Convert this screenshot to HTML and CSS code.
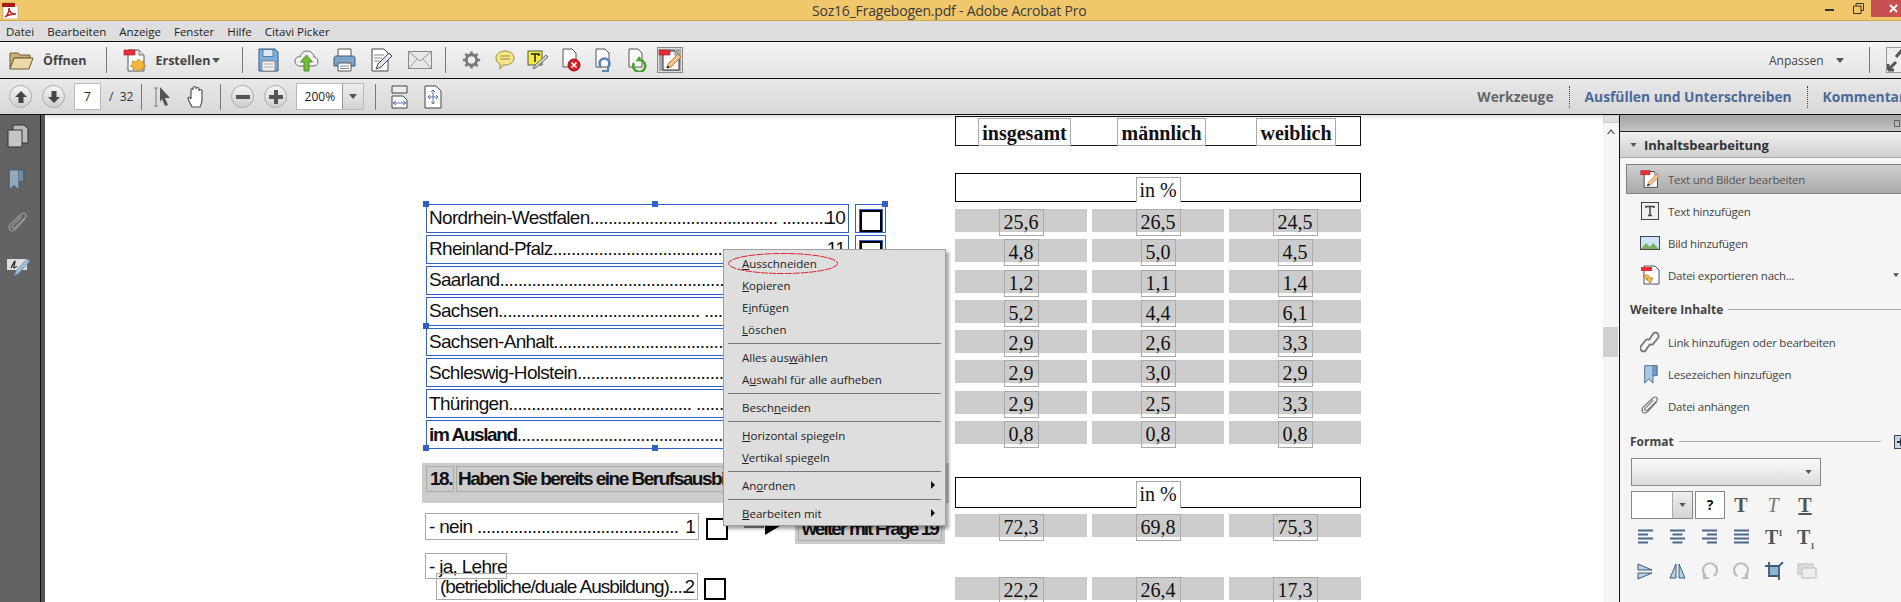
FILE: index.html
```html
<!DOCTYPE html>
<html lang="de">
<head>
  <meta charset="UTF-8" />
  <title>Soz16_Fragebogen.pdf - Adobe Acrobat Pro</title>
  <meta name="viewport" content="width=device-width, initial-scale=1.0" />
  <link rel="stylesheet" href="styles.css">
</head>
<body>
  <svg class="defs" width="0" height="0">
    <symbol id="doc-pencil" viewBox="0 0 24 24">
      <path d="M5 3h12l4 4v15H5z" fill="#fff" stroke="#333"/>
      <path d="M17 3v4h4" fill="#ddd" stroke="#777"/>
      <rect x="1" y="2" width="11" height="5" fill="#e8303a" stroke="#a01a20" stroke-width=".6"/>
      <path d="M9 20l1-4 10-10 3 3-10 10z" fill="#f0c48a" stroke="#a86a3a" stroke-width=".8"/>
      <path d="M9 20l1-2 1 1z" fill="#222" stroke="#222"/>
    </symbol>
    <symbol id="bookmark" viewBox="0 0 18 24">
      <path d="M2 2h10v21l-5-5-5 5z" fill="#a5c8e4" stroke="#3d5a78"/>
      <path d="M12 2h5v12h-5" fill="#6f9cc4" stroke="#3d5a78"/>
    </symbol>
    <symbol id="clip" viewBox="0 0 24 24">
      <path d="M20 7L9 19c-2 2-5 2-6 0s-1-4 1-6L15 3c2-2 4-2 5-1s1 3-1 5L9 17c-1 1-2 1-3 0s0-2 1-3l9-9" fill="none" stroke="currentColor" stroke-width="1.4"/>
    </symbol>
    <symbol id="down-tri" viewBox="0 0 8 5">
      <path d="M0 0h8L4 5z" fill="#555"/>
    </symbol>
  </svg>

  <header class="titlebar">
    <svg class="app-logo" width="18" height="18" viewBox="0 0 18 18">
      <path d="M2 2h11l4 4v12H2z" fill="#fff" stroke="#999" stroke-width=".6"/>
      <rect x="1" y="2" width="13" height="4" fill="#b01818"/>
      <path d="M4 16c3-2 4-6 4-9 0 3 2 6 7 6-4 0-8 1-11 3z" fill="none" stroke="#c02020" stroke-width="1.4"/>
    </svg>
    <span class="title-text">Soz16_Fragebogen.pdf - Adobe Acrobat Pro</span>
    <div class="win-btns">
      <span class="win-min"></span>
      <svg class="win-restore" width="11" height="11" viewBox="0 0 11 11">
        <path d="M3 2.500V.5h7.500v7H8M.5 3h7.500v7.500H.5z" fill="none" stroke="#333"/>
      </svg>
      <div class="win-close">
        <svg width="9" height="9" viewBox="0 0 9 9"><path d="M1 1l7 7M8 1L1 8" stroke="#fff" stroke-width="1.800"/></svg>
      </div>
    </div>
  </header>

  <nav class="menubar">
    <span>Datei</span><span>Bearbeiten</span><span>Anzeige</span><span>Fenster</span><span>Hilfe</span><span>Citavi Picker</span>
  </nav>

  <div class="toolbar toolbar-main">
    <svg class="open-icon" width="25" height="22" viewBox="0 0 25 22">
      <path d="M1 4h8l2 2h10v3H5L1 20z" fill="#c8b078" stroke="#6a5a38"/>
      <path d="M5 9h19l-4 11H1z" fill="#ecd9a8" stroke="#6a5a38"/>
    </svg>
    <span class="tb-label open-label">Öffnen</span>
    <span class="tb-sep sep-a"></span>
    <svg class="create-icon" width="24" height="26" viewBox="0 0 24 26">
      <path d="M5 3h11l5 5v16H5z" fill="#fff" stroke="#555"/>
      <path d="M16 3v5h5" fill="#ddd" stroke="#777"/>
      <rect x="1" y="3" width="11" height="5" fill="#e8303a" stroke="#a01a20" stroke-width=".6"/>
      <path d="M16 12l2 3 3-1-1 3 3 2-3 1 0 3-3-1-2 3-2-3-3 1 0-3-3-1 3-2-1-3 3 1z" fill="#f0b83a" stroke="#b07a18" stroke-width=".6"/>
    </svg>
    <span class="tb-label create-label">Erstellen</span>
    <svg class="create-arrow" width="8" height="5"><use href="#down-tri"/></svg>
    <span class="tb-sep sep-b"></span>

    <div class="tb-cell wide">
      <svg width="21" height="24" viewBox="0 0 21 24">
        <path d="M1 1h16l3 3v19H1z" fill="#7fb0dc" stroke="#2f5a88"/>
        <rect x="5" y="1.500" width="10" height="7" fill="#d8e8f4" stroke="#2f5a88" stroke-width=".7"/>
        <rect x="4" y="13" width="13" height="10" fill="#f0f0f0" stroke="#667" stroke-width=".7"/>
        <path d="M6 16h9M6 19h9" stroke="#aaa"/>
      </svg>
    </div>
    <div class="tb-cell wide">
      <svg width="25" height="23" viewBox="0 0 25 23">
        <path d="M6 17C2 17 1 14 1 12c0-3 3-5 5-4 1-4 4-6 7-6 4 0 7 3 7 6 3 0 4 3 4 5 0 2-2 4-5 4z" fill="#f2f2f2" stroke="#666"/>
        <path d="M12.500 6l6 7h-3.500v9h-5v-9H6.500z" fill="#6fbf3a" stroke="#3d7a1c" stroke-width=".8"/>
      </svg>
    </div>
    <div class="tb-cell wide">
      <svg width="23" height="24" viewBox="0 0 23 24">
        <path d="M5 1h13v8H5z" fill="#fff" stroke="#555"/>
        <path d="M1 10c0-1 1-2 2-2h17c1 0 2 1 2 2v8H1z" fill="#7ea4c8" stroke="#3d5a78"/>
        <path d="M5 15h13v8H5z" fill="#fff" stroke="#555"/>
        <path d="M7 18h9M7 20.500h9" stroke="#888"/>
      </svg>
    </div>
    <div class="tb-cell wide">
      <svg width="22" height="24" viewBox="0 0 22 24">
        <path d="M1 1h12l4 4v18H1z" fill="#fff" stroke="#444"/>
        <path d="M3 7h10M3 10h8M3 13h6" stroke="#888"/>
        <path d="M5 21l2-5 11-11 3 3-11 11z" fill="#dfe6ee" stroke="#445"/>
      </svg>
    </div>
    <div class="tb-cell wide">
      <svg width="24" height="18" viewBox="0 0 24 18">
        <rect x=".5" y=".5" width="23" height="17" fill="#e8e8e8" stroke="#888"/>
        <path d="M1 1l11 9 11-9M1 17l8-9M23 17l-8-9" fill="none" stroke="#999"/>
      </svg>
    </div>
    <span class="tb-sep sep-c"></span>
    <div class="tb-cell">
      <svg width="19" height="20" viewBox="0 0 20 20">
        <circle cx="10" cy="10" r="5.500" fill="none" stroke="#777" stroke-width="3"/>
        <path d="M10 1v3M10 16v3M1 10h3M16 10h3M3.500 3.500l2 2M14.500 14.500l2 2M3.500 16.500l2-2M14.500 5.500l2-2" stroke="#777" stroke-width="2.600"/>
      </svg>
    </div>
    <div class="tb-cell">
      <svg width="20" height="20" viewBox="0 0 20 20">
        <path d="M10 1c5 0 9 3 9 7s-4 7-9 7H8l-3 4v-5C3 13 1 11 1 8c0-4 4-7 9-7z" fill="#f6e68a" stroke="#a08a30"/>
        <path d="M5 6h10M5 9h10" stroke="#a08a30"/>
      </svg>
    </div>
    <div class="tb-cell">
      <svg width="22" height="20" viewBox="0 0 22 20">
        <rect x="1" y="1" width="14" height="14" fill="#f6ec3a" stroke="#555"/>
        <path d="M4 4h8v2M8 4v8" fill="none" stroke="#222" stroke-width="1.500"/>
        <path d="M6 19l2-4 11-10 2 2-11 10z" fill="#c8ccd4" stroke="#555" stroke-width=".8"/>
      </svg>
    </div>
    <div class="tb-cell">
      <svg width="20" height="24" viewBox="0 0 20 24">
        <path d="M2 1h9l4 4v14H2z" fill="#fff" stroke="#555"/>
        <circle cx="13" cy="17" r="6" fill="#d8202a" stroke="#8a1218"/>
        <path d="M10.500 14.500l5 5M15.500 14.500l-5 5" stroke="#fff" stroke-width="1.600"/>
      </svg>
    </div>
    <div class="tb-cell">
      <svg width="19" height="24" viewBox="0 0 19 24">
        <path d="M2 1h9l4 4v14H2z" fill="#fff" stroke="#555"/>
        <path d="M7 19a5 5 0 1 1 7 0" fill="none" stroke="#5a86b0" stroke-width="2.600"/>
        <path d="M8 23h6v-4" fill="none" stroke="#5a86b0" stroke-width="2"/>
      </svg>
    </div>
    <div class="tb-cell">
      <svg width="20" height="24" viewBox="0 0 20 24">
        <path d="M2 1h9l4 4v14H2z" fill="#fff" stroke="#555"/>
        <path d="M7 15a6 6 0 1 0 6-3h-2l2-3" fill="none" stroke="#4aa030" stroke-width="2.600"/>
      </svg>
    </div>
    <div class="tb-active">
      <svg width="24" height="24"><use href="#doc-pencil"/></svg>
    </div>

    <div class="tb-right">
      <span class="customize">Anpassen</span>
      <svg class="customize-arrow" width="8" height="5"><use href="#down-tri"/></svg>
      <span class="tb-sep"></span>
      <div class="tb-expand">
        <svg width="24" height="24" viewBox="0 0 24 24">
          <path d="M1 22l8-8M1 22v-6M1 22h6M9 9l6-7" stroke="#555" stroke-width="3" fill="none"/>
        </svg>
      </div>
    </div>
  </div>

  <div class="toolbar toolbar-nav">
    <div class="round-btn nav-up">
      <svg width="14" height="14" viewBox="0 0 14 14"><path d="M7 1l6 6H9.500v6h-5V7H1z" fill="#444"/></svg>
    </div>
    <div class="round-btn nav-down">
      <svg width="14" height="14" viewBox="0 0 14 14"><path d="M7 13L1 7h3.500V1h5v6H13z" fill="#444"/></svg>
    </div>
    <span class="page-input">7</span>
    <span class="page-total">/&nbsp;&nbsp;32</span>
    <span class="tb-sep sep-d"></span>
    <svg class="cursor-icon" width="19" height="22" viewBox="0 0 19 22">
      <path d="M1 2h4M1 20h4M3 2v18" stroke="#777" fill="none"/>
      <path d="M7 1l10 11h-5l3 7-3 1-3-7-2 3z" fill="#555"/>
    </svg>
    <svg class="hand-icon" width="20" height="24" viewBox="0 0 20 24">
      <path d="M5 22c-1-3-4-6-4-9 0-1 2-1 3 1V5c0-2 2-2 2 0V3c0-2 3-2 3 0v1c0-2 3-2 3 0v2c0-2 3-2 3 0v9c0 3-1 5-2 7z" fill="#fff" stroke="#555" stroke-width="1.200"/>
    </svg>
    <span class="tb-sep sep-e"></span>
    <div class="round-btn zoom-out">
      <svg width="14" height="14" viewBox="0 0 14 14"><rect x="0" y="5" width="14" height="4" fill="#555"/></svg>
    </div>
    <div class="round-btn zoom-in">
      <svg width="14" height="14" viewBox="0 0 14 14"><path d="M5 0h4v5h5v4H9v5H5V9H0V5h5z" fill="#555"/></svg>
    </div>
    <div class="zoom-combo">
      <span class="zoom-value">200%</span>
      <span class="zoom-drop"><svg width="8" height="5"><use href="#down-tri"/></svg></span>
    </div>
    <span class="tb-sep sep-f"></span>
    <svg class="fit-icon" width="17" height="24" viewBox="0 0 17 24">
      <path d="M1 1h15v7H1z" fill="#eee" stroke="#444"/>
      <path d="M1 11h11l4 4v8H1z" fill="#fff" stroke="#444"/>
      <path d="M2 18h13M2 18l3-2M2 18l3 2M15 18l-3-2M15 18l-3 2" fill="none" stroke="#5a78a8"/>
    </svg>
    <svg class="fit-icon fit-page" width="18" height="24" viewBox="0 0 18 24">
      <path d="M1 1h11l5 5v17H1z" fill="#fff" stroke="#444"/>
      <path d="M9 5v14M4 12h10M9 5L7 7M9 5l2 2M9 19l-2-2M9 19l2-2M4 12l2-2M4 12l2 2M14 12l-2-2M14 12l-2 2" fill="none" stroke="#5a78a8"/>
    </svg>
    <div class="tabs">
      <span class="tab tab-grey">Werkzeuge</span>
      <span class="tab">Ausfüllen und Unterschreiben</span>
      <span class="tab">Kommentar</span>
    </div>
  </div>

  <main class="workspace">
    <aside class="rail">
      <svg width="22" height="24" viewBox="0 0 22 24">
        <path d="M6 1h11l4 4v14H6z" fill="#bbb" stroke="#333"/>
        <path d="M1 6h14v17H1z" fill="#c4c4c4" stroke="#333"/>
      </svg>
      <svg class="rail-mark" width="18" height="23"><use href="#bookmark"/></svg>
      <svg width="22" height="24"><use href="#clip"/></svg>
      <svg class="rail-sign" width="24" height="19" viewBox="0 0 24 19">
        <rect x="0" y="1" width="20" height="11" fill="#ddd"/>
        <path d="M4 10c2-3 3-7 4-7 0 3-2 7-1 7s2-2 3-1" fill="none" stroke="#222" stroke-width="1.200"/>
        <path d="M7 18l2-5 11-12 3 2-11 12z" fill="#9cc0dc" stroke="#5a7a98" stroke-width=".7"/>
      </svg>
    </aside>

    <section class="doc">
      <div class="form-col">
        <div class="selection">
          <div class="sel-row">
            <div class="sel-text"><span class="sel-label">Nordrhein-Westfalen......................................... ...........</span><span>10</span></div>
            <div class="sel-check"><span class="checkbox"></span></div>
          </div>
          <div class="sel-row">
            <div class="sel-text"><span class="sel-label">Rheinland-Pfalz............................................................</span><span>11</span></div>
            <div class="sel-check"><span class="checkbox"></span></div>
          </div>
          <div class="sel-row">
            <div class="sel-text"><span class="sel-label">Saarland.......................................................................</span><span>12</span></div>
            <div class="sel-check"><span class="checkbox"></span></div>
          </div>
          <div class="sel-row">
            <div class="sel-text"><span class="sel-label">Sachsen............................................ ..........................</span><span>13</span></div>
            <div class="sel-check"><span class="checkbox"></span></div>
          </div>
          <div class="sel-row">
            <div class="sel-text"><span class="sel-label">Sachsen-Anhalt............................................................</span><span>14</span></div>
            <div class="sel-check"><span class="checkbox"></span></div>
          </div>
          <div class="sel-row">
            <div class="sel-text"><span class="sel-label">Schleswig-Holstein.......................................................</span><span>15</span></div>
            <div class="sel-check"><span class="checkbox"></span></div>
          </div>
          <div class="sel-row">
            <div class="sel-text"><span class="sel-label">Thüringen........................................ .............................</span><span>16</span></div>
            <div class="sel-check"><span class="checkbox"></span></div>
          </div>
          <div class="sel-row">
            <div class="sel-text"><span class="sel-label"><b>im Ausland</b>..................................................................</span><span>17</span></div>
            <div class="sel-check"><span class="checkbox"></span></div>
          </div>
          <span class="handle h-tl"></span>
          <span class="handle h-tc"></span>
          <span class="handle h-tr"></span>
          <span class="handle h-ml"></span>
          <span class="handle h-bl"></span>
          <span class="handle h-bc"></span>
        </div>

        <div class="question">
          <span class="q-box q-no">18.</span>
          <span class="q-box q-text">Haben Sie bereits eine Berufsausbildung abgeschlossen?</span>
        </div>

        <div class="answer">
          <div class="answer-box no-box"><span class="sel-label">- nein ............................................</span><span>1</span></div>
          <span class="paper-check"></span>
          <svg class="go-arrow" width="36" height="10" viewBox="0 0 36 10">
            <path d="M0 1h20" stroke="#000"/>
            <path d="M21 0h15l-15 9z" fill="#000"/>
          </svg>
          <div class="goto"><span class="goto-text">weiter mit Frage 19</span></div>
        </div>

        <div class="answer-box ja-box">- ja, Lehre</div>
        <div class="answer answer-last">
          <div class="answer-box dual-box"><span class="sel-label">(betriebliche/duale Ausbildung)....</span><span>2</span></div>
          <span class="paper-check dual-check"></span>
        </div>
      </div>

      <div class="stats-col">
        <div class="stats-head">
          <span class="head-box hb-1">insgesamt</span>
          <span class="head-box hb-2">männlich</span>
          <span class="head-box hb-3">weiblich</span>
        </div>

        <div class="unit-bar"><span class="unit-box">in %</span></div>
        <div class="stat-rows">
          <div class="stat-row"><div class="bar"><span class="val">25,6</span></div><div class="bar"><span class="val">26,5</span></div><div class="bar"><span class="val">24,5</span></div></div>
          <div class="stat-row"><div class="bar"><span class="val">4,8</span></div><div class="bar"><span class="val">5,0</span></div><div class="bar"><span class="val">4,5</span></div></div>
          <div class="stat-row"><div class="bar"><span class="val">1,2</span></div><div class="bar"><span class="val">1,1</span></div><div class="bar"><span class="val">1,4</span></div></div>
          <div class="stat-row"><div class="bar"><span class="val">5,2</span></div><div class="bar"><span class="val">4,4</span></div><div class="bar"><span class="val">6,1</span></div></div>
          <div class="stat-row"><div class="bar"><span class="val">2,9</span></div><div class="bar"><span class="val">2,6</span></div><div class="bar"><span class="val">3,3</span></div></div>
          <div class="stat-row"><div class="bar"><span class="val">2,9</span></div><div class="bar"><span class="val">3,0</span></div><div class="bar"><span class="val">2,9</span></div></div>
          <div class="stat-row"><div class="bar"><span class="val">2,9</span></div><div class="bar"><span class="val">2,5</span></div><div class="bar"><span class="val">3,3</span></div></div>
          <div class="stat-row"><div class="bar"><span class="val">0,8</span></div><div class="bar"><span class="val">0,8</span></div><div class="bar"><span class="val">0,8</span></div></div>
        </div>

        <div class="unit-bar unit-second"><span class="unit-box">in %</span></div>
        <div class="stat-row row-nein"><div class="bar"><span class="val">72,3</span></div><div class="bar"><span class="val">69,8</span></div><div class="bar"><span class="val">75,3</span></div></div>
        <div class="stat-row row-ja"><div class="bar"><span class="val">22,2</span></div><div class="bar"><span class="val">26,4</span></div><div class="bar"><span class="val">17,3</span></div></div>
      </div>

      <div class="ctx-menu">
        <svg class="ctx-ring" width="112" height="23" viewBox="0 0 112 23">
          <ellipse cx="56" cy="11.500" rx="54.500" ry="10" fill="none" stroke="#e0202a" stroke-dasharray="7 1"/>
        </svg>
        <div class="ctx-item"><span><u>A</u>usschneiden</span></div>
        <div class="ctx-item"><span><u>K</u>opieren</span></div>
        <div class="ctx-item"><span>E<u>i</u>nfügen</span></div>
        <div class="ctx-item"><span><u>L</u>öschen</span></div>
        <div class="ctx-sep"></div>
        <div class="ctx-item"><span>Alles aus<u>w</u>ählen</span></div>
        <div class="ctx-item"><span>A<u>u</u>swahl für alle aufheben</span></div>
        <div class="ctx-sep"></div>
        <div class="ctx-item"><span>Besch<u>n</u>eiden</span></div>
        <div class="ctx-sep"></div>
        <div class="ctx-item"><span><u>H</u>orizontal spiegeln</span></div>
        <div class="ctx-item"><span><u>V</u>ertikal spiegeln</span></div>
        <div class="ctx-sep"></div>
        <div class="ctx-item"><span>An<u>o</u>rdnen</span><i class="ctx-more"></i></div>
        <div class="ctx-sep"></div>
        <div class="ctx-item"><span><u>B</u>earbeiten mit</span><i class="ctx-more"></i></div>
      </div>
    </section>

    <div class="vscroll">
      <span class="vs-cap"></span>
      <svg class="vs-arrow" width="8" height="5" viewBox="0 0 8 5"><path d="M0 5l4-5 4 5-1.500 0L4 2 1.500 5z" fill="#555"/></svg>
      <span class="vs-thumb"></span>
    </div>

    <aside class="panel">
      <div class="panel-grip"><span class="grip-box"></span></div>
      <div class="panel-head">
        <svg width="7" height="4"><use href="#down-tri"/></svg>
        <span>Inhaltsbearbeitung</span>
      </div>
      <div class="p-item p-selected">
        <svg width="20" height="20"><use href="#doc-pencil"/></svg>
        <span>Text und Bilder bearbeiten</span>
      </div>
      <div class="p-item">
        <svg width="20" height="20" viewBox="0 0 20 20">
          <rect x="1.500" y="1.500" width="17" height="17" fill="#f0f0f0" stroke="#444"/>
          <path d="M6 7V5.500h8V7M10 5.500v9M8 14.500h4" fill="none" stroke="#444" stroke-width="1.500"/>
        </svg>
        <span>Text hinzufügen</span>
      </div>
      <div class="p-item">
        <svg width="20" height="14" viewBox="0 0 20 14">
          <rect x=".5" y=".5" width="19" height="13" fill="#cfe4f4" stroke="#444"/>
          <path d="M1 13l5-6 4 4 3-4 6 6z" fill="#7ab060"/>
        </svg>
        <span>Bild hinzufügen</span>
      </div>
      <div class="p-item">
        <svg width="20" height="20" viewBox="0 0 20 20">
          <path d="M4 1h11l4 4v14H4z" fill="#fff" stroke="#555"/>
          <rect x="1" y="2" width="11" height="4" fill="#e8303a"/>
          <path d="M3 11c3-2 6-1 7 2h3l-3 5-4-4h2c-1-1-3-1-5-3z" fill="#f0c050" stroke="#a07020" stroke-width=".7"/>
        </svg>
        <span>Datei exportieren nach...</span>
        <svg class="p-more-arrow" width="6" height="4"><use href="#down-tri"/></svg>
      </div>

      <h3 class="p-heading"><span>Weitere Inhalte</span><i></i></h3>
      <div class="p-item">
        <svg width="20" height="22" viewBox="0 0 20 22">
          <path d="M9 9l4-6c1-2 4-2 5 0s1 3 0 4l-4 5c-1 2-3 2-4 1M10 13l-4 6c-1 2-4 2-5 0s-1-3 0-4l4-5c1-2 3-2 4-1" fill="none" stroke="#777" stroke-width="1.800"/>
        </svg>
        <span>Link hinzufügen oder bearbeiten</span>
      </div>
      <div class="p-item">
        <svg width="15" height="20"><use href="#bookmark"/></svg>
        <span>Lesezeichen hinzufügen</span>
      </div>
      <div class="p-item">
        <svg width="20" height="22"><use href="#clip"/></svg>
        <span>Datei anhängen</span>
      </div>

      <h3 class="p-heading format-heading">
        <span>Format</span><i></i>
        <svg class="format-plus" width="12" height="14" viewBox="0 0 12 14">
          <rect x=".5" y=".5" width="14" height="13" fill="#c8d4e4" stroke="#445"/>
          <path d="M7 3v8M3 7h8" stroke="#234" stroke-width="1.800"/>
        </svg>
      </h3>
      <div class="font-select"><svg width="7" height="4"><use href="#down-tri"/></svg></div>
      <div class="font-row">
        <div class="size-select"><span class="size-drop"><svg width="7" height="4"><use href="#down-tri"/></svg></span></div>
        <span class="color-box">?</span>
        <span class="fmt-t">T</span>
        <span class="fmt-t fmt-i">T</span>
        <span class="fmt-t fmt-u">T</span>
      </div>
      <div class="tool-row">
        <svg width="17" height="16" viewBox="0 0 17 16"><path d="M1 1.500h15M1 5.500h10M1 9.500h15M1 13.500h10" stroke="#4a6a8a" stroke-width="2"/></svg>
        <svg width="17" height="16" viewBox="0 0 17 16"><path d="M1 1.500h15M3.500 5.500h10M1 9.500h15M3.500 13.500h10" stroke="#4a6a8a" stroke-width="2"/></svg>
        <svg width="17" height="16" viewBox="0 0 17 16"><path d="M1 1.500h15M6 5.500h10M1 9.500h15M6 13.500h10" stroke="#4a6a8a" stroke-width="2"/></svg>
        <svg width="17" height="16" viewBox="0 0 17 16"><path d="M1 1.500h15M1 5.500h15M1 9.500h15M1 13.500h15" stroke="#4a6a8a" stroke-width="2"/></svg>
        <span class="fmt-t">T<sup>1</sup></span>
        <span class="fmt-t">T<sub>1</sub></span>
      </div>
      <div class="tool-row tool-row-low">
        <svg width="16" height="17" viewBox="0 0 16 17"><path d="M1 1l14 6H1zM1 10h14L1 16z" fill="#b8d0e8" stroke="#3d5a78"/></svg>
        <svg width="17" height="16" viewBox="0 0 17 16"><path d="M7 1L1 15h6zM10 1l6 14h-6z" fill="#b8d0e8" stroke="#3d5a78"/></svg>
        <svg width="17" height="18" viewBox="0 0 17 18"><path d="M5 14a7 7 0 1 1 8 0M3 11v5h5" fill="none" stroke="#bbb" stroke-width="2.200"/></svg>
        <svg width="17" height="18" viewBox="0 0 17 18"><path d="M12 14a7 7 0 1 0-8 0M14 11v5H9" fill="none" stroke="#bbb" stroke-width="2.200"/></svg>
        <svg width="19" height="18" viewBox="0 0 19 18"><path d="M0 4h14v10H4V0M14 4l4-4M14 14v4" fill="none" stroke="#3d5a78" stroke-width="1.800"/><rect x="5" y="5" width="8" height="8" fill="#8fb4d4"/></svg>
        <svg width="20" height="16" viewBox="0 0 20 16"><rect x="1" y="1" width="15" height="10" fill="#ddd" stroke="#bbb"/><rect x="5" y="5" width="14" height="10" fill="#eee" stroke="#bbb"/></svg>
      </div>
      <div class="p-clipped">Bearbeiten mit</div>
    </aside>
  </main>
</body>
</html>
```

FILE: styles.css
```css
* {
  box-sizing: border-box;
}

html, body {
  margin: 0;
  height: 602px;
  overflow: hidden;
}

body {
  font-family: "Open Sans", "Noto Sans", sans-serif;
  font-size: 12px;
  color: #222;
  background-color: #fff;
}

.defs {
  position: absolute;
}

svg {
  display: block;
  flex: none;
}

/* title bar */
.titlebar {
  height: 21px;
  display: flex;
  align-items: center;
  padding-left: 1px;
  background-color: #f0c76b;
  border-bottom: 1px solid #d2a950;
}

.title-text {
  margin-left: 793px;
  font-size: 14px;
  letter-spacing: -0.2px;
  color: #3a3a3a;
  white-space: nowrap;
}

.win-btns {
  margin-left: auto;
  display: flex;
  align-items: flex-start;
  height: 100%;
}

.win-min {
  width: 9px;
  height: 2px;
  margin-top: 9px;
  background-color: #333;
}

.win-restore {
  margin: 3px 7px 0 19px;
}

.win-close {
  width: 30px;
  height: 17px;
  display: flex;
  align-items: center;
  justify-content: flex-end;
  padding-right: 3px;
  background-color: #c75050;
}

/* menu bar */
.menubar {
  height: 20px;
  display: flex;
  align-items: center;
  gap: 13px;
  padding-left: 6px;
  background-color: #dedede;
  font-size: 11.500px;
}

/* toolbars */
.toolbar {
  display: flex;
  align-items: center;
  border-top: 1px solid #111;
  overflow: hidden;
  white-space: nowrap;
}

.toolbar-main {
  height: 37px;
  padding-left: 9px;
  background: linear-gradient(#f4f4f4, #e3e3e3);
}

.toolbar-nav {
  height: 37px;
  padding-left: 9px;
  background: linear-gradient(#e8e8e8, #d8d8d8);
  border-bottom: 1px solid #111;
}

.tb-sep {
  flex: none;
  width: 1px;
  height: 26px;
  background-color: #777;
}

.tb-label {
  font-weight: 700;
  font-size: 12.500px;
  color: #444;
}

.open-label { margin-left: 9px; }
.sep-a { margin-left: 20px; }
.create-icon { margin-left: 16px; }
.create-label { margin-left: 8px; }
.create-arrow { margin-left: 2px; }
.sep-b { margin: 0 6px 0 22px; }
.sep-c { margin: 0 9px 0 6px; }

.tb-cell {
  flex: none;
  width: 33px;
  display: flex;
  justify-content: center;
}

.tb-cell.wide {
  width: 38px;
}

.tb-active {
  flex: none;
  width: 26px;
  height: 26px;
  margin-left: 4px;
  display: flex;
  align-items: center;
  justify-content: center;
  background-color: #aaa;
  border: 1px solid #8a8a8a;
  box-shadow: inset 0 0 0 1px #ddd;
}

.tb-right {
  margin-left: auto;
  display: flex;
  align-items: center;
  width: 132px;
  flex: none;
}

.customize {
  color: #444;
  font-size: 12px;
}

.customize-arrow {
  margin: 0 25px 0 12px;
}

.tb-expand {
  flex: none;
  width: 26px;
  height: 26px;
  margin-left: 16px;
  border: 1px solid #999;
  background-color: #eee;
}

/* navigation row */
.round-btn {
  flex: none;
  width: 23px;
  height: 23px;
  display: flex;
  align-items: center;
  justify-content: center;
  border-radius: 50%;
  border: 1px solid #aaa;
  background: linear-gradient(#f5f5f5, #cfcfcf);
}

.nav-down { margin-left: 10px; }
.zoom-out { margin-left: 10px; }
.zoom-in { margin-left: 10px; }

.page-input {
  flex: none;
  width: 27px;
  height: 27px;
  margin-left: 9px;
  border: 1px solid #bbb;
  background-color: #fff;
  text-align: center;
  line-height: 25px;
}

.page-total {
  margin-left: 8px;
  color: #333;
}

.sep-d { margin-left: 8px; }
.cursor-icon { margin-left: 11px; }
.hand-icon { margin-left: 15px; }
.sep-e { margin-left: 13px; }

.zoom-combo {
  flex: none;
  display: flex;
  width: 68px;
  height: 27px;
  margin-left: 9px;
  border: 1px solid #bbb;
  background-color: #fff;
}

.zoom-value {
  width: 45px;
  text-align: center;
  line-height: 25px;
}

.zoom-drop {
  flex: 1;
  display: flex;
  align-items: center;
  justify-content: center;
  border-left: 1px solid #999;
  background: linear-gradient(#eee, #d4d4d4);
}

.sep-f { margin-left: 11px; }
.fit-icon { margin-left: 15px; }
.fit-page { margin-left: 16px; }

.tabs {
  margin-left: 1020px;
  display: flex;
  align-items: center;
  flex: none;
}

.tab {
  padding: 0 15px;
  font-size: 13.800px;
  font-weight: 700;
  color: #4a6a98;
  line-height: 22px;
  border-left: 1px dotted #444;
}

.tab-grey {
  color: #666;
  border-left: none;
}

/* main area */
.workspace {
  height: 487px;
  display: flex;
}

.rail {
  flex: none;
  width: 45px;
  display: flex;
  flex-direction: column;
  gap: 20px;
  padding: 9px 0 0 7px;
  color: #999;
  background-color: #636363;
  border-right: 4px solid #555;
  box-shadow: inset -1px 0 0 #111;
}

.rail-mark {
  opacity: 0.7;
}

.rail-sign {
  margin-top: 3px;
}

.doc {
  position: relative;
  flex: none;
  width: 1558px;
  display: grid;
  grid-template-columns: 527px 406px;
  column-gap: 6px;
  align-items: start;
  padding-left: 377px;
  background: linear-gradient(#e4e4e4, #fff 5px);
  overflow: hidden;
}

.vscroll {
  position: relative;
  flex: none;
  width: 16px;
  background-color: #f5f5f5;
}

.vs-cap {
  display: block;
  height: 8px;
  background-color: #e0e0e0;
  border: 1px solid #ccc;
}

.vs-arrow {
  position: absolute;
  top: 14px;
  left: 4px;
}

.vs-thumb {
  position: absolute;
  top: 212px;
  left: 0;
  width: 15px;
  height: 30px;
  background-color: #d0d0d0;
}

/* selected list in the pdf */
.form-col {
  margin-top: 89px;
}

.selection {
  position: relative;
  width: 459px;
  height: 245px;
  margin-left: 4px;
  display: flex;
  flex-direction: column;
  gap: 2px;
  font-family: "Liberation Sans", sans-serif;
  font-size: 19px;
  letter-spacing: -0.7px;
}

.sel-row {
  flex: 1;
  display: flex;
  gap: 6px;
  min-height: 0;
}

.sel-text {
  width: 423px;
  display: flex;
  align-items: center;
  padding: 0 3px 0 2px;
  border: 1px solid #3260c8;
  color: #111;
  white-space: nowrap;
}

.sel-label {
  flex: 1;
  min-width: 0;
}

.sel-label b {
  letter-spacing: -1.4px;
}

.sel-check {
  flex: none;
  width: 31px;
  display: flex;
  justify-content: center;
  padding-top: 5px;
  border: 1px solid #3260c8;
}

.checkbox {
  width: 22px;
  height: 22px;
  border: 2px solid #000;
  outline: 1px solid #3260c8;
}

.handle {
  position: absolute;
  width: 6px;
  height: 6px;
  background-color: #3260c8;
}

.h-tl { left: -3px; top: -3px; }
.h-tc { left: 226px; top: -3px; }
.h-tr { left: 456px; top: -3px; }
.h-ml { left: -3px; top: 119px; }
.h-bl { left: -3px; top: 241px; }
.h-bc { left: 226px; top: 241px; }

/* question block */
.question {
  height: 40px;
  margin-top: 14px;
  padding: 3px 4px;
  display: flex;
  align-items: flex-start;
  gap: 2px;
  background-color: #ccc;
  font-family: "Liberation Sans", sans-serif;
  font-size: 19px;
  letter-spacing: -1.5px;
  font-weight: 700;
  color: #111;
  white-space: nowrap;
}

.q-box {
  height: 26px;
  line-height: 24px;
  padding: 0 1px;
  border: 1px solid #aaa;
}

.q-no {
  width: 28px;
  padding: 0 3px;
}

.q-text {
  flex: 1;
  min-width: 0;
}

.answer {
  height: 27px;
  margin-top: 10px;
  display: flex;
  align-items: flex-start;
}

.answer-box {
  display: flex;
  height: 27px;
  line-height: 25px;
  padding: 0 3px;
  border: 1px solid #aaa;
  color: #111;
  white-space: nowrap;
  font-family: "Liberation Sans", sans-serif;
  font-size: 19px;
  letter-spacing: -0.7px;
}

.no-box {
  width: 274px;
  margin-left: 3px;
}

.paper-check {
  flex: none;
  width: 22px;
  height: 22px;
  margin: 5px 0 0 7px;
  border: 2px solid #000;
}

.go-arrow {
  margin: 13px 0 0 16px;
}

.goto {
  flex: none;
  width: 150px;
  height: 30px;
  margin: 1px 0 0 15px;
  padding: 0 3px 3px;
  display: flex;
  background-color: #ccc;
  font-family: "Liberation Sans", sans-serif;
  font-size: 19px;
  letter-spacing: -1.9px;
  white-space: nowrap;
}

.goto-text {
  flex: 1;
  text-align: center;
  line-height: 27px;
  font-weight: 700;
  color: #111;
  border: 1px solid #aaa;
}

.ja-box {
  width: 82px;
  height: 26px;
  margin: 13px 0 0 3px;
}

.answer-last {
  margin-top: -6px;
}

.dual-box {
  width: 262px;
  margin-left: 14px;
  letter-spacing: -1px;
}

.dual-check {
  margin-left: 6px;
}

/* statistics column */
.stats-col {
  margin-top: 1px;
  font-family: "Liberation Serif", serif;
  font-size: 20px;
  color: #111;
}

.stats-head {
  height: 30px;
  display: flex;
  align-items: flex-end;
  border: 1px solid #111;
}

.head-box {
  height: 28px;
  margin-bottom: -1px;
  line-height: 29px;
  text-align: center;
  font-weight: 700;
  background-color: #fff;
  border: 1px solid #aaa;
}

.hb-1 { width: 93px; margin-left: 22px; }
.hb-2 { width: 89px; margin-left: 46px; }
.hb-3 { width: 80px; margin-left: 50px; }

.unit-bar {
  height: 29px;
  margin-top: 27px;
  display: flex;
  justify-content: center;
  align-items: flex-end;
  border: 1px solid #000;
}

.unit-second {
  height: 31px;
  margin-top: 33px;
}

.unit-box {
  width: 45px;
  height: 25px;
  margin-bottom: -1px;
  line-height: 25px;
  text-align: center;
  background-color: #fff;
  border: 1px solid #aaa;
  border-bottom: none;
}

.unit-second .unit-box {
  height: 27px;
}

.stat-rows {
  margin-top: 7px;
  display: flex;
  flex-direction: column;
  gap: 7.300px;
}

.stat-row {
  height: 23px;
  display: grid;
  grid-template-columns: repeat(3, 132px);
  column-gap: 5px;
}

.row-nein { margin-top: 6px; }
.row-ja { margin-top: 40px; }

.bar {
  height: 23px;
  display: flex;
  justify-content: center;
  background-color: #ccc;
}

.val {
  height: 27px;
  padding: 0 4px;
  line-height: 25px;
  border: 1px solid #aaa;
}

/* context menu */
.ctx-menu {
  position: absolute;
  left: 678px;
  top: 134px;
  width: 223px;
  padding: 2px 2px 1px;
  background-color: #dedede;
  border: 1px solid #a0a0a0;
  box-shadow: 3px 3px 3px rgba(0,0,0,0.35);
  font-size: 11.500px;
  color: #222;
}

.ctx-ring {
  position: absolute;
  left: 3px;
  top: 2px;
}

.ctx-item {
  height: 22px;
  display: flex;
  align-items: center;
  justify-content: space-between;
  padding: 0 8px 0 16px;
}

.ctx-sep {
  height: 6px;
  margin: 0 2px;
  background: linear-gradient(#777, #777) center / 100% 1px no-repeat;
}

.ctx-more {
  border-left: 4px solid #111;
  border-top: 4px solid transparent;
  border-bottom: 4px solid transparent;
}

/* right panel */
.panel {
  flex: none;
  width: 282px;
  overflow: hidden;
  background-color: #f5f5f5;
  border-left: 1px solid #111;
  color: #444;
  font-size: 11.500px;
  letter-spacing: -0.23px;
}

.panel-grip {
  height: 17px;
  display: flex;
  justify-content: flex-end;
  align-items: center;
  padding-right: 1px;
  background: linear-gradient(#a4a4a4, #c4c4c4);
  border-bottom: 1px solid #222;
}

.grip-box {
  width: 6px;
  height: 7px;
  border: 1px solid #666;
}

.panel-head {
  height: 26px;
  display: flex;
  align-items: center;
  gap: 7px;
  padding-left: 10px;
  background: linear-gradient(#efefef, #cfcfcf);
  border-bottom: 1px solid #aaa;
  font-size: 13px;
  font-weight: 700;
  letter-spacing: 0;
  color: #333;
}

.p-item {
  height: 32px;
  margin-left: 6px;
  padding-left: 12px;
  display: grid;
  grid-template-columns: 24px 1fr auto;
  column-gap: 6px;
  align-items: center;
  justify-items: center;
  white-space: nowrap;
  color: #777;
}

.p-item span {
  justify-self: start;
  color: #444;
}

.p-selected {
  height: 30px;
  margin-top: 6px;
  margin-bottom: 1px;
  padding-left: 11px;
  background: linear-gradient(#cfcfcf, #a9a9a9);
  border: 1px solid #808080;
  border-right: none;
}

.p-selected span {
  color: #555;
}

.p-more-arrow {
  margin-right: 2px;
}

.p-heading {
  height: 33px;
  margin: 2px 0 0;
  padding-left: 10px;
  display: flex;
  align-items: center;
  gap: 5px;
  font-size: 12px;
  font-weight: 700;
  letter-spacing: 0;
  color: #444;
}

.p-heading i {
  flex: 1;
  height: 1px;
  background-color: #aaa;
}

.format-heading {
  margin-top: 3px;
}

.format-heading i {
  flex: none;
  width: 202px;
}

.format-plus {
  margin-left: 8px;
}

.font-select {
  width: 190px;
  height: 28px;
  margin: 0 0 0 11px;
  padding-right: 8px;
  display: flex;
  align-items: center;
  justify-content: flex-end;
  background: linear-gradient(#fafafa, #dcdcdc);
  border: 1px solid #888;
}

.font-row {
  height: 28px;
  margin: 5px 0 0 11px;
  display: flex;
  align-items: center;
}

.size-select {
  width: 62px;
  height: 28px;
  display: flex;
  justify-content: flex-end;
  background-color: #fff;
  border: 1px solid #888;
}

.size-drop {
  width: 20px;
  display: flex;
  align-items: center;
  justify-content: center;
  background: linear-gradient(#eee, #d4d4d4);
  border-left: 1px solid #aaa;
}

.color-box {
  width: 30px;
  height: 28px;
  margin-left: 2px;
  line-height: 26px;
  text-align: center;
  font-size: 14px;
  font-weight: 700;
  color: #111;
  background-color: #fff;
  border: 1px solid #888;
}

.fmt-t {
  font-family: "Liberation Serif", serif;
  font-weight: 700;
  font-size: 20px;
  letter-spacing: 0;
  color: #555;
  line-height: 18px;
}

.font-row .fmt-t {
  width: 32px;
  text-align: center;
}

.fmt-i {
  font-style: italic;
  font-weight: 400;
  color: #777;
}

.fmt-u {
  text-decoration: underline;
}

.fmt-t sup, .fmt-t sub {
  font-size: 9px;
  line-height: 0;
}

.tool-row {
  height: 32px;
  margin: 2px 0 0 17px;
  display: grid;
  grid-template-columns: repeat(6, 32px);
  align-items: center;
  justify-items: start;
}

.tool-row-low {
  margin-top: 2px;
}

.p-clipped {
  margin: 13px 0 0 18px;
  font-weight: 700;
}
```
